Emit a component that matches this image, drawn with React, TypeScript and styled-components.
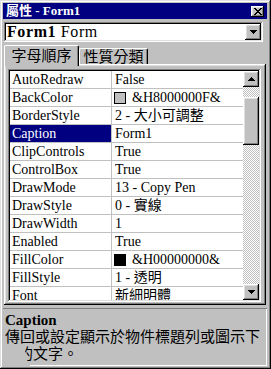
import React from "react";
import styled, { createGlobalStyle, css } from "styled-components";

const GlobalStyle = createGlobalStyle`
  html, body {
    margin: 0;
    padding: 0;
    background: #c0c0c0;
  }
  body {
    font-family: "Liberation Serif", "Noto Sans CJK TC", serif;
    font-size: 14px;
    color: #000;
  }
`;

const raised = css`
  box-shadow: inset -1px -1px #000, inset 1px 1px #fff, inset -2px -2px #808080,
    inset 2px 2px #dfdfdf;
`;

const sunken = css`
  box-shadow: inset -1px -1px #fff, inset 1px 1px #808080, inset -2px -2px #dfdfdf,
    inset 2px 2px #000;
`;

type Prop = { name: string; value: string; swatch?: string; selected?: boolean };

const rows: Prop[] = [
  { name: "AutoRedraw", value: "False" },
  { name: "BackColor", value: "&H8000000F&", swatch: "#c0c0c0" },
  { name: "BorderStyle", value: "2 - 大小可調整" },
  { name: "Caption", value: "Form1", selected: true },
  { name: "ClipControls", value: "True" },
  { name: "ControlBox", value: "True" },
  { name: "DrawMode", value: "13 - Copy Pen" },
  { name: "DrawStyle", value: "0 - 實線" },
  { name: "DrawWidth", value: "1" },
  { name: "Enabled", value: "True" },
  { name: "FillColor", value: "&H00000000&", swatch: "#000" },
  { name: "FillStyle", value: "1 - 透明" },
  { name: "Font", value: "新細明體" },
];

const Arrow = ({ up }: { up?: boolean }) => (
  <svg width="7" height="4" viewBox="0 0 7 4" shapeRendering="crispEdges">
    <path
      d="M0 0h7v1H0zM1 1h5v1H1zM2 2h3v1H2zM3 3h1v1H3z"
      fill="#000"
      transform={up ? "rotate(180 3.5 2)" : undefined}
    />
  </svg>
);

export default function App() {
  return (
    <>
      <GlobalStyle />
      <Window>
        <TitleBar>
          <TitleText>屬性 - Form1</TitleText>
          <CloseButton>
            <svg width="8" height="7" viewBox="0 0 8 7" shapeRendering="crispEdges">
              <path
                d="M0 0h2v1H0zM6 0h2v1H6zM1 1h2v1H1zM5 1h2v1H5zM2 2h4v1H2zM3 3h2v1H3zM2 4h4v1H2zM1 5h2v1H1zM5 5h2v1H5zM0 6h2v1H0zM6 6h2v1H6z"
                fill="#000"
              />
            </svg>
          </CloseButton>
        </TitleBar>

        <Combo>
          <ComboText>
            <b>Form1</b> Form
          </ComboText>
          <DropButton>
            <Arrow />
          </DropButton>
        </Combo>

        <TabStrip>
          <Tab $active>字母順序</Tab>
          <Tab>性質分類</Tab>
        </TabStrip>

        <TabPanel>
          <Grid>
            <Rows>
              {rows.map((r) => (
                <Row key={r.name}>
                  <NameCell $selected={r.selected}>{r.name}</NameCell>
                  <ValueCell>
                    {r.swatch && <Swatch $color={r.swatch} />}
                    {r.value}
                  </ValueCell>
                </Row>
              ))}
            </Rows>
            <ScrollBar>
              <ArrowButton>
                <Arrow up />
              </ArrowButton>
              <Track>
                <Thumb />
              </Track>
              <ArrowButton>
                <Arrow />
              </ArrowButton>
            </ScrollBar>
          </Grid>
        </TabPanel>

        <Description>
          <DescTitle>Caption</DescTitle>
          <DescLine>傳回或設定顯示於物件標題列或圖示下</DescLine>
          <DescLine $indent>
            <Clipped>
              <span>的</span>
            </Clipped>
            文字。
          </DescLine>
        </Description>
      </Window>
    </>
  );
}

const Window = styled.div`
  width: 271px;
  height: 369px;
  box-sizing: border-box;
  background: #c0c0c0;
  padding: 3px 4px 3px 3px;
  display: flex;
  flex-direction: column;
  box-shadow: inset -1px -1px #000, inset 1px 1px #dfdfdf, inset -2px -2px #808080,
    inset 2px 2px #fff;
`;

const TitleBar = styled.div`
  height: 16px;
  background: #000080;
  color: #fff;
  display: flex;
  align-items: center;
  justify-content: space-between;
  padding: 0 3px 0 3px;
  flex-shrink: 0;
`;

const TitleText = styled.span`
  font-weight: bold;
  font-size: 13px;
  line-height: 16px;
  white-space: nowrap;
`;

const CloseButton = styled.div`
  width: 13px;
  height: 11px;
  background: #c0c0c0;
  display: flex;
  align-items: center;
  justify-content: center;
  ${raised}
`;

const Combo = styled.div`
  margin: 3px 4px 0 1px;
  height: 20px;
  box-sizing: border-box;
  padding: 2px;
  background: #fff;
  display: flex;
  align-items: center;
  flex-shrink: 0;
  ${sunken}
`;

const ComboText = styled.div`
  flex: 1;
  font-size: 16px;
  letter-spacing: 0.6px;
  line-height: 16px;
  padding-left: 1px;
  white-space: nowrap;
`;

const DropButton = styled.div`
  width: 16px;
  height: 16px;
  background: #c0c0c0;
  display: flex;
  align-items: center;
  justify-content: center;
  ${raised}
`;

const TabStrip = styled.div`
  margin: 3px 0 0 1px;
  height: 19px;
  display: flex;
  align-items: flex-end;
  flex-shrink: 0;
`;

const Tab = styled.div<{ $active?: boolean }>`
  position: relative;
  box-sizing: border-box;
  background: #c0c0c0;
  font-size: 15px;
  line-height: 15px;
  text-align: center;
  white-space: nowrap;
  border-top: 1px solid #fff;
  border-left: 1px solid #fff;
  border-right: 1px solid #000;
  border-radius: 2px 2px 0 0;
  box-shadow: inset -1px 0 #808080;
  ${({ $active }) =>
    $active
      ? css`
          width: 75px;
          height: 21px;
          margin-bottom: -2px;
          padding-top: 3px;
          z-index: 1;
        `
      : css`
          width: 69px;
          height: 16px;
          padding-top: 1px;
        `}
`;

const TabPanel = styled.div`
  margin: 0 1px 0 1px;
  height: 241px;
  box-sizing: border-box;
  padding: 5px 5px 3px 4px;
  flex-shrink: 0;
  box-shadow: inset -1px -1px #000, inset 1px 1px #fff, inset -2px -2px #808080,
    inset 2px 2px #dfdfdf;
`;

const Grid = styled.div`
  height: 233px;
  box-sizing: border-box;
  padding: 2px;
  background: #fff;
  display: flex;
  ${sunken}
`;

const Rows = styled.div`
  flex: 1;
  overflow: hidden;
`;

const Row = styled.div`
  display: flex;
  height: 18px;
  box-sizing: border-box;
  border-bottom: 1px solid #c0c0c0;
  line-height: 17px;
  white-space: nowrap;
`;

const NameCell = styled.div<{ $selected?: boolean }>`
  width: 102px;
  flex-shrink: 0;
  padding-left: 2px;
  box-sizing: border-box;
  border-right: 1px solid #c0c0c0;
  overflow: hidden;
  background: ${({ $selected }) => ($selected ? "#000080" : "transparent")};
  color: ${({ $selected }) => ($selected ? "#fff" : "#000")};
`;

const ValueCell = styled.div`
  flex: 1;
  padding-left: 3px;
  display: flex;
  align-items: center;
  overflow: hidden;
`;

const Swatch = styled.span<{ $color: string }>`
  width: 12px;
  height: 12px;
  box-sizing: border-box;
  border: 1px solid #000;
  background: ${({ $color }) => $color};
  margin: 0 6px 0 -1px;
  flex-shrink: 0;
`;

const ScrollBar = styled.div`
  width: 16px;
  display: flex;
  flex-direction: column;
`;

const ArrowButton = styled.div`
  height: 16px;
  flex-shrink: 0;
  background: #c0c0c0;
  display: flex;
  align-items: center;
  justify-content: center;
  ${raised}
`;

const Track = styled.div`
  flex: 1;
  padding-top: 10px;
  background-image: conic-gradient(#fff 25%, #c0c0c0 0 50%, #fff 0 75%, #c0c0c0 0);
  background-size: 2px 2px;
`;

const Thumb = styled.div`
  height: 48px;
  background: #c0c0c0;
  ${raised}
`;

const Description = styled.div`
  margin-top: 3px;
  flex: 1;
  padding: 4px 2px 0 2px;
  overflow: hidden;
  background: linear-gradient(#fff, #fff) 27px 100% / calc(100% - 27px) 1px no-repeat,
    #c0c0c0;
  box-shadow: inset 0 1px #808080, inset -1px 0 #fff;
`;

const DescTitle = styled.div`
  font-weight: bold;
  font-size: 15px;
  line-height: 17px;
`;

const DescLine = styled.div<{ $indent?: boolean }>`
  font-size: 15px;
  line-height: 17px;
  white-space: nowrap;
  padding-left: ${({ $indent }) => ($indent ? "20px" : "0")};
`;

const Clipped = styled.span`
  display: inline-block;
  width: 8px;
  overflow: hidden;
  vertical-align: top;

  span {
    display: inline-block;
    margin-left: -7px;
  }
`;
